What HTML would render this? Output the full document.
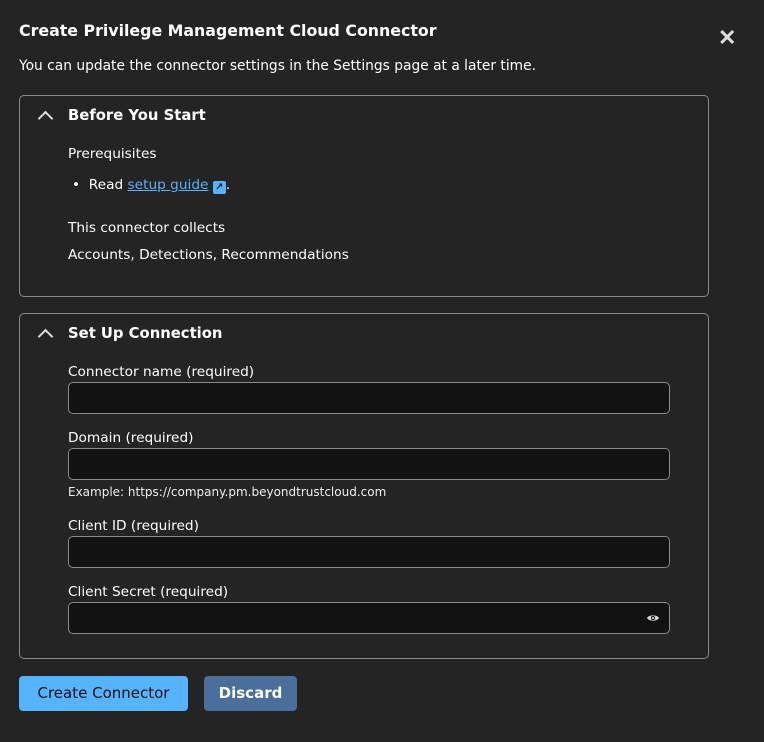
<!DOCTYPE html>
<html><head><style>
body{margin:0;width:764px;height:742px;background:#242424;font-family:"DejaVu Sans","Liberation Sans",sans-serif;color:#fff;position:relative;overflow:hidden}
.a{position:absolute;white-space:nowrap}
.box{position:absolute;left:19px;width:688px;border:1px solid #8a8a8a;border-radius:5px}
.inp{position:absolute;left:68px;width:600px;height:30px;background:#121212;border:1px solid #8a8a8a;border-radius:5px}
.lbl{font-size:13.7px;left:68px}
.chev{position:absolute;left:40px;width:9px;height:9px;border-left:2px solid #ddd;border-top:2px solid #ddd;transform:rotate(45deg)}
</style></head><body>
<div class="a" style="left:19px;top:21px;font-size:15.8px;font-weight:bold">Create Privilege Management Cloud Connector</div>
<div class="a" style="left:19px;top:58px;font-size:13.8px">You can update the connector settings in the Settings page at a later time.</div>
<div class="a" style="left:718px;top:25px;font-size:22px;font-weight:bold;color:#ddd;font-family:'Liberation Sans',sans-serif">✕</div>

<div class="box" style="top:95px;height:200px"></div>
<div class="chev" style="top:113px"></div>
<div class="a" style="left:68px;top:107px;font-size:14.8px;font-weight:bold">Before You Start</div>
<div class="a lbl" style="top:146px">Prerequisites</div>
<div class="a lbl" style="left:72px;top:177px">•&nbsp;&nbsp;Read <span style="color:#55b3ff;text-decoration:underline">setup guide</span> <span style="display:inline-block;width:13px;height:13px;background:#55b3ff;border-radius:2px;vertical-align:-1px;color:#222;font-size:10px;line-height:13px;text-align:center;font-weight:bold">↗</span>.</div>
<div class="a lbl" style="top:220px">This connector collects</div>
<div class="a lbl" style="top:247px">Accounts, Detections, Recommendations</div>

<div class="box" style="top:313px;height:344px"></div>
<div class="chev" style="top:331px"></div>
<div class="a" style="left:68px;top:325px;font-size:14.8px;font-weight:bold">Set Up Connection</div>
<div class="a lbl" style="top:364px">Connector name (required)</div>
<div class="inp" style="top:382px"></div>
<div class="a lbl" style="top:430px">Domain (required)</div>
<div class="inp" style="top:448px"></div>
<div class="a" style="left:68px;top:485px;font-size:12px;color:#eee">Example: https://company.pm.beyondtrustcloud.com</div>
<div class="a lbl" style="top:518px">Client ID (required)</div>
<div class="inp" style="top:536px"></div>
<div class="a lbl" style="top:584px">Client Secret (required)</div>
<div class="inp" style="top:602px"></div>
<svg class="a" style="left:646px;top:613px" width="14" height="10" viewBox="0 0 14 10"><path d="M1 5C3 1.5 11 1.5 13 5C11 8.5 3 8.5 1 5Z" fill="#ddd"/><circle cx="7" cy="5" r="2.2" fill="#121212"/><circle cx="7" cy="5" r="1.1" fill="#ddd"/></svg>

<div class="a" style="left:19px;top:676px;width:169px;height:35px;background:#55b3ff;border-radius:4px;color:#111;font-size:15px;line-height:35px;text-align:center">Create Connector</div>
<div class="a" style="left:204px;top:676px;width:93px;height:35px;background:#4a6f9a;border-radius:4px;color:#fff;font-size:15px;font-weight:bold;line-height:35px;text-align:center">Discard</div>
</body></html>
